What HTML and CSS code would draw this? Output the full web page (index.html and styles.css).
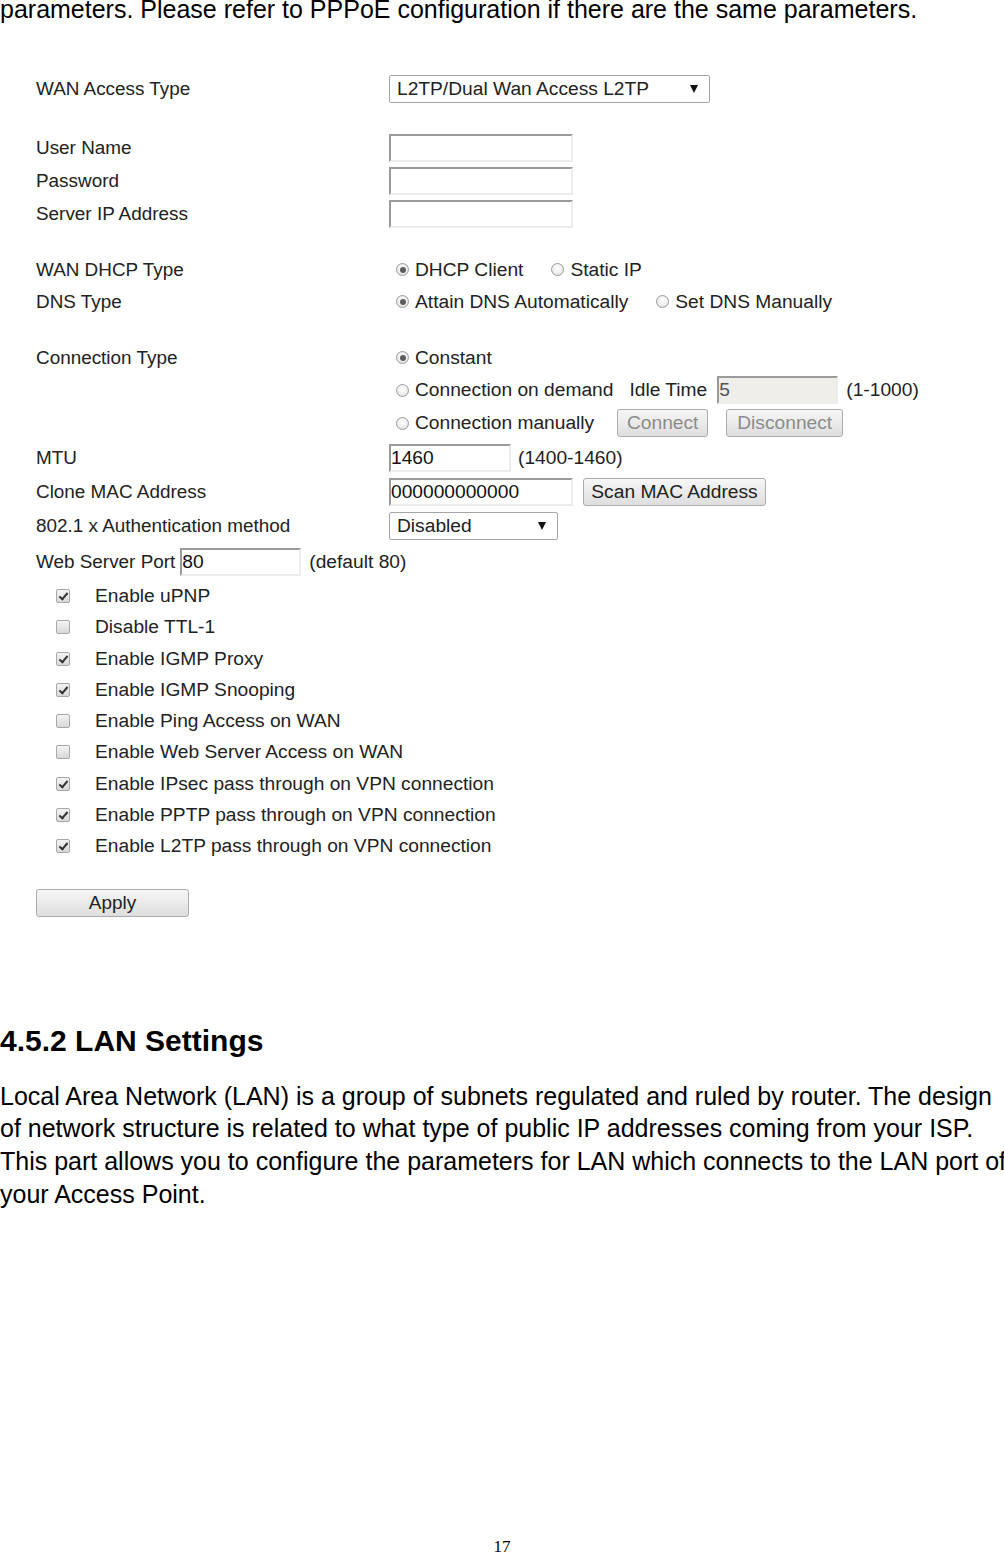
FILE: index.html
```html
<!DOCTYPE html>
<html>
<head>
<meta charset="utf-8">
<link rel="stylesheet" href="styles.css">
</head>
<body>
<p class="intro">parameters. Please refer to PPPoE configuration if there are the same parameters.</p>

<div class="form">
  <div class="row">
    <span class="label">WAN Access Type</span>
    <div class="select sel-wan"><span class="sel-text">L2TP/Dual Wan Access L2TP</span><span class="arrow"></span></div>
  </div>

  <div class="row gap-26">
    <span class="label">User Name</span>
    <span class="input in-long"></span>
  </div>
  <div class="row">
    <span class="label">Password</span>
    <span class="input in-long"></span>
  </div>
  <div class="row">
    <span class="label">Server IP Address</span>
    <span class="input in-long"></span>
  </div>

  <div class="row h32 gap-23">
    <span class="label">WAN DHCP Type</span>
    <div class="ctrl">
      <span class="opt"><span class="radio on"></span>DHCP Client</span>
      <span class="opt sp-28"><span class="radio"></span>Static IP</span>
    </div>
  </div>
  <div class="row h32">
    <span class="label">DNS Type</span>
    <div class="ctrl">
      <span class="opt"><span class="radio on"></span>Attain DNS Automatically</span>
      <span class="opt sp-28"><span class="radio"></span>Set DNS Manually</span>
    </div>
  </div>

  <div class="row h32 gap-24">
    <span class="label">Connection Type</span>
    <div class="ctrl">
      <span class="opt"><span class="radio on"></span>Constant</span>
    </div>
  </div>
  <div class="row">
    <span class="label"></span>
    <div class="ctrl">
      <span class="opt"><span class="radio"></span>Connection on demand</span>
      <span class="idle">Idle Time</span>
      <span class="input in-idle disabled">5</span>
      <span class="hint">(1-1000)</span>
    </div>
  </div>
  <div class="row">
    <span class="label"></span>
    <div class="ctrl">
      <span class="opt"><span class="radio"></span>Connection manually</span>
      <span class="btn btn-connect off">Connect</span>
      <span class="btn btn-disconnect off">Disconnect</span>
    </div>
  </div>

  <div class="row h34 gap-1">
    <span class="label">MTU</span>
    <span class="input in-mtu">1460</span>
    <span class="hint">(1400-1460)</span>
  </div>
  <div class="row h34">
    <span class="label">Clone MAC Address</span>
    <span class="input in-long">000000000000</span>
    <span class="btn btn-scan">Scan MAC Address</span>
  </div>
  <div class="row h34">
    <span class="label">802.1 x Authentication method</span>
    <div class="select sel-auth"><span class="sel-text">Disabled</span><span class="arrow"></span></div>
  </div>
  <div class="row h36 gap-1">
    <span class="label-inline">Web Server Port</span>
    <span class="input in-port">80</span>
    <span class="hint">(default 80)</span>
  </div>

  <div class="checks">
    <div class="check"><span class="box on"></span>Enable uPNP</div>
    <div class="check"><span class="box"></span>Disable TTL-1</div>
    <div class="check"><span class="box on"></span>Enable IGMP Proxy</div>
    <div class="check"><span class="box on"></span>Enable IGMP Snooping</div>
    <div class="check"><span class="box"></span>Enable Ping Access on WAN</div>
    <div class="check"><span class="box"></span>Enable Web Server Access on WAN</div>
    <div class="check"><span class="box on"></span>Enable IPsec pass through on VPN connection</div>
    <div class="check"><span class="box on"></span>Enable PPTP pass through on VPN connection</div>
    <div class="check"><span class="box on"></span>Enable L2TP pass through on VPN connection</div>
  </div>

  <div class="apply-row"><span class="btn btn-apply">Apply</span></div>
</div>

<h2 class="section">4.5.2 LAN Settings</h2>
<p class="para">Local Area Network (LAN) is a group of subnets regulated and ruled by router. The design<br>of network structure is related to what type of public IP addresses coming from your ISP.<br>This part allows you to configure the parameters for LAN which connects to the LAN port of<br>your Access Point.</p>

<div class="page-num">17</div>
</body>
</html>
```

FILE: styles.css
```css
html, body {
  margin: 0;
  padding: 0;
  background: #ffffff;
}
body {
  width: 1004px;
  overflow: hidden;
  font-family: "Liberation Sans", Arial, sans-serif;
  color: #000;
}

.intro {
  margin: -7px 0 0 0;
  font-size: 25px;
  line-height: 32.6px;
  white-space: nowrap;
}

.form {
  margin-top: 47px;
  padding-left: 36px;
  color: #222;
  font-size: 19.2px;
}

.row {
  display: flex;
  align-items: center;
  height: 33px;
}
.h32 { height: 32px; }
.h34 { height: 34px; }
.h36 { height: 36px; }
.gap-1 { margin-top: 1px; }
.gap-23 { margin-top: 23px; }
.gap-24 { margin-top: 24px; }
.gap-26 { margin-top: 26px; }

.label {
  width: 353px;
  flex: none;
  font-size: 18.9px;
}
.label-inline {
  margin-right: 5px;
  font-size: 18.9px;
}

/* selects */
.select {
  box-sizing: border-box;
  height: 28px;
  border: 1px solid #a6a6a6;
  border-radius: 2px;
  background: #fff;
  display: flex;
  align-items: center;
  justify-content: space-between;
  padding: 0 11px 0 7px;
}
.sel-wan { width: 321px; }
.sel-auth { width: 169px; }
.arrow {
  width: 0;
  height: 0;
  border-left: 4px solid transparent;
  border-right: 4px solid transparent;
  border-top: 8px solid #111;
}

/* text inputs */
.input {
  box-sizing: border-box;
  height: 28px;
  background: #fff;
  border-top: 2px solid #9a9a9a;
  border-left: 2px solid #9a9a9a;
  border-right: 2px solid #ececec;
  border-bottom: 2px solid #ececec;
  display: flex;
  align-items: center;
  padding-left: 0;
  color: #111;
  font-size: 19.2px;
}
.in-long { width: 184px; }
.in-mtu { width: 122px; }
.in-idle { width: 121px; }
.in-port { width: 121px; }
.input.disabled {
  background: #efeeea;
  color: #555;
}

.hint { margin-left: 8px; }
.in-mtu + .hint { margin-left: 7px; }

/* radios */
.ctrl {
  display: flex;
  align-items: center;
  padding-left: 7px;
}
.opt {
  display: flex;
  align-items: center;
  gap: 6px;
}
.sp-28 { margin-left: 28px; }
.radio {
  box-sizing: border-box;
  width: 13px;
  height: 13px;
  border-radius: 50%;
  border: 1px solid #9c9c9c;
  background: radial-gradient(circle at 50% 40%, #ffffff 0%, #ececec 60%, #d2d2d2 100%);
  position: relative;
  flex: none;
}
.radio.on::after {
  content: "";
  position: absolute;
  left: 2.5px;
  top: 2.5px;
  width: 6px;
  height: 6px;
  border-radius: 50%;
  background: #5e5e5e;
}
.idle { margin-left: 16px; margin-right: 10px; }

/* buttons */
.btn {
  box-sizing: border-box;
  height: 28px;
  border: 1px solid #acacac;
  border-radius: 3px;
  background: linear-gradient(#f6f6f6, #dedede);
  display: inline-flex;
  align-items: center;
  justify-content: center;
  color: #222;
  font-size: 19.2px;
}
.btn.off { color: #8c8c8c; }
.btn-connect { width: 91px; margin-left: 23px; }
.btn-disconnect { width: 117px; margin-left: 18px; }
.btn-scan { width: 183px; margin-left: 10px; }
.btn-apply { width: 153px; height: 28px; font-size: 18.9px; }

/* checkboxes */
.checks {
  padding-left: 20px;
  margin-top: 1px;
  font-size: 19.2px;
}
.check {
  display: flex;
  align-items: center;
  height: 31.25px;
}
.box {
  box-sizing: border-box;
  width: 14px;
  height: 14px;
  border: 1px solid #a8a8a8;
  border-radius: 2px;
  background: linear-gradient(#f4f4f4, #d8d8d8);
  margin-right: 25px;
  position: relative;
  flex: none;
}
.box.on::after {
  content: "";
  position: absolute;
  left: 4px;
  top: 1px;
  width: 3px;
  height: 7px;
  border-right: 2px solid #333;
  border-bottom: 2px solid #333;
  transform: rotate(40deg);
}

.apply-row {
  margin-top: 27px;
  display: flex;
}

.section {
  margin: 108px 0 0 0;
  font-size: 30px;
  line-height: 32px;
  font-weight: bold;
}
.para {
  margin: 23px 0 0 0;
  font-size: 25px;
  line-height: 32.6px;
  white-space: nowrap;
}

.page-num {
  margin-top: 328px;
  text-align: center;
  font-family: "Liberation Serif", "Times New Roman", serif;
  font-size: 17px;
  line-height: 18px;
}
```
